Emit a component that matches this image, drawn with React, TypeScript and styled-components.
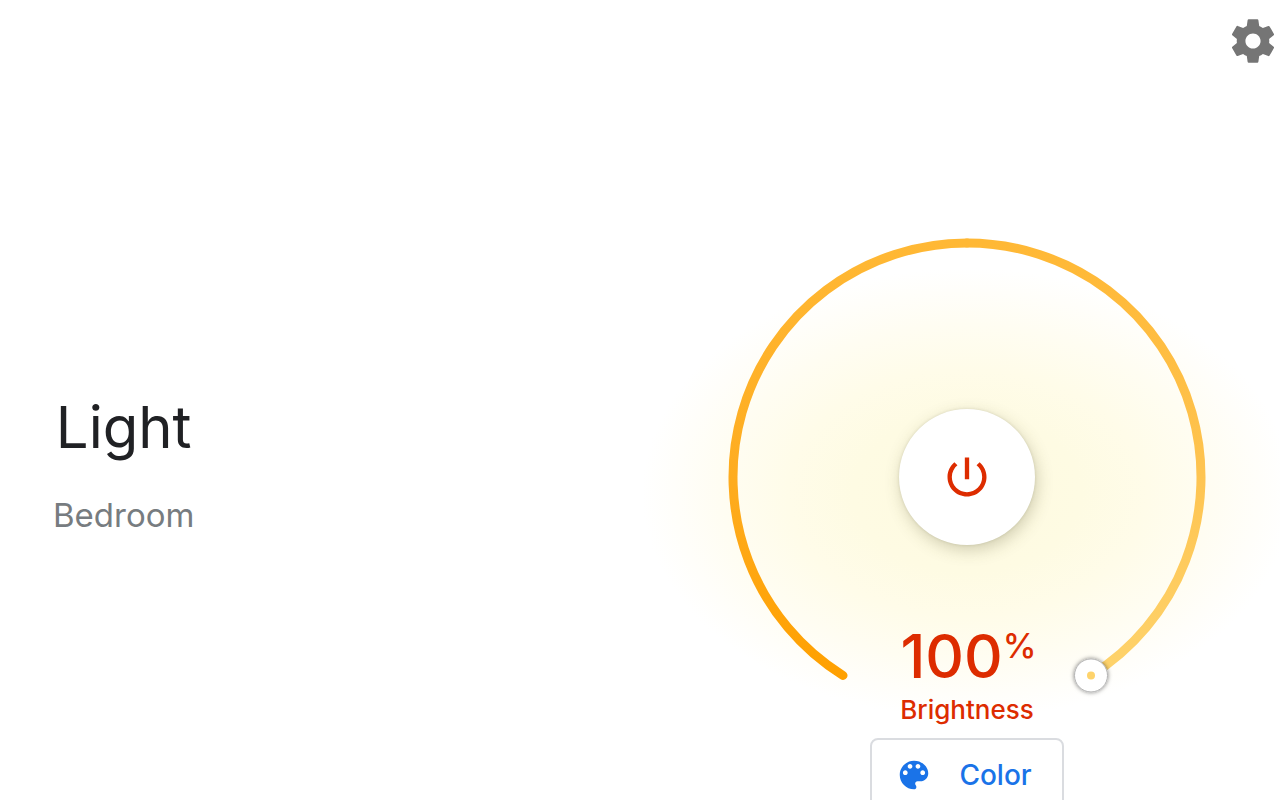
import React, { useState } from "react";
import styled, { createGlobalStyle } from "styled-components";

const GlobalStyle = createGlobalStyle`
  *, *::before, *::after { box-sizing: border-box; }
  body {
    margin: 0;
    background: #ffffff;
    color: #202124;
    font-family: Inter, "Liberation Sans", sans-serif;
  }
`;

const Page = styled.div`
  height: 100vh;
  overflow: hidden auto;
  scrollbar-width: none;
`;

const TopBar = styled.header`
  display: flex;
  justify-content: flex-end;
  padding: 15px 1px;
`;

const IconButton = styled.button`
  display: flex;
  padding: 0;
  border: 0;
  background: none;
  color: #757575;
  cursor: pointer;
`;

const Icon = styled.svg<{ $size: number }>`
  display: block;
  flex: none;
  width: ${(p) => p.$size}px;
  height: ${(p) => p.$size}px;
  fill: currentColor;
`;

const Content = styled.main`
  display: grid;
  grid-template-columns: 1fr 1fr;
`;

const Device = styled.section`
  display: flex;
  flex-direction: column;
  align-items: flex-start;
  justify-content: center;
  padding: 24px 0 0 53px;
`;

const DeviceText = styled.div`
  text-align: center;
`;

const DeviceName = styled.h1`
  margin: 0;
  font-size: 58px;
  line-height: 88px;
  font-weight: 400;
`;

const Room = styled.p`
  margin: 0;
  font-size: 33px;
  line-height: 88px;
  color: #777c80;
`;

const Controls = styled.section`
  display: flex;
  flex-direction: column;
  align-items: center;
  padding: 155px 0 24px 14px;
  background: radial-gradient(
    ellipse 325px 225px at 327px 411px,
    #fefae0 0%,
    #fefbe3 35%,
    #fffce9 55%,
    #fffdf2 75%,
    #fffefa 90%,
    #ffffff 100%
  );
`;

const Dial = styled.div`
  display: grid;
  place-items: center;
  width: 480px;
  height: 480px;

  > * {
    grid-area: 1 / 1;
  }
`;

const DialArc = styled.svg`
  width: 480px;
  height: 480px;
  overflow: visible;
`;

const PowerButton = styled.button`
  display: flex;
  align-items: center;
  justify-content: center;
  width: 136px;
  height: 136px;
  padding: 0;
  border: 0;
  border-radius: 50%;
  background: #ffffff;
  color: #dd2c00;
  box-shadow: 0 0 3px rgba(80, 80, 40, 0.16), 2px 5px 16px rgba(80, 80, 40, 0.26);
  cursor: pointer;
`;

const Readout = styled.label`
  display: flex;
  flex-direction: column;
  align-items: center;
  align-self: end;
  gap: 2px;
  margin-bottom: -9px;
  color: #dd2c00;
  font-weight: 500;
`;

const Level = styled.output`
  display: flex;
  align-items: flex-start;
  padding-left: 3px;
  font-size: 60px;
  line-height: 72px;
`;

const Unit = styled.span`
  padding-top: 6px;
  font-size: 34px;
  line-height: 40px;
`;

const ReadoutLabel = styled.span`
  font-size: 26px;
  line-height: 32px;
`;

const LevelInput = styled.input`
  align-self: end;
  width: 320px;
  height: 24px;
  margin: 0;
  opacity: 0;
  cursor: pointer;
`;

const ColorButton = styled.button`
  display: flex;
  align-items: center;
  gap: 26px;
  margin-top: 21px;
  padding: 16px 30px 16px 23px;
  border: 2px solid #dadce0;
  border-radius: 8px;
  background: #ffffff;
  color: #1a73e8;
  font: inherit;
  font-size: 28px;
  line-height: 38px;
  font-weight: 500;
  cursor: pointer;
`;

const CENTER = 240;
const RADIUS = 234;
const SWEEP = 148;

// Angles are in degrees, clockwise from the top of the dial.
const pointAt = (angle: number) => {
  const rad = (angle * Math.PI) / 180;
  return { x: CENTER + RADIUS * Math.sin(rad), y: CENTER - RADIUS * Math.cos(rad) };
};

const arc = (from: number, to: number) => {
  const a = pointAt(from);
  const b = pointAt(to);
  return `M${a.x} ${a.y}A${RADIUS} ${RADIUS} 0 0 1 ${b.x} ${b.y}`;
};

const SettingsIcon = () => (
  <Icon $size={52} viewBox="0 0 24 24" aria-hidden="true">
    <path d="M19.43 12.98c.04-.32.07-.64.07-.98s-.03-.66-.07-.98l2.11-1.65c.19-.15.24-.42.12-.64l-2-3.46c-.12-.22-.39-.3-.61-.22l-2.49 1c-.52-.4-1.08-.73-1.69-.98l-.38-2.65C14.46 2.18 14.25 2 14 2h-4c-.25 0-.46.18-.49.42l-.38 2.65c-.61.25-1.17.59-1.69.98l-2.49-1c-.23-.09-.49 0-.61.22l-2 3.46c-.13.22-.07.49.12.64l2.11 1.65c-.04.32-.07.65-.07.98s.03.66.07.98l-2.11 1.65c-.19.15-.24.42-.12.64l2 3.46c.12.22.39.3.61.22l2.49-1c.52.4 1.08.73 1.69.98l.38 2.65c.03.24.24.42.49.42h4c.25 0 .46-.18.49-.42l.38-2.65c.61-.25 1.17-.59 1.69-.98l2.49 1c.23.09.49 0 .61-.22l2-3.46c.12-.22.07-.49-.12-.64l-2.11-1.65zM12 15.5c-1.93 0-3.5-1.57-3.5-3.5s1.57-3.5 3.5-3.5 3.5 1.57 3.5 3.5-1.57 3.5-3.5 3.5z" />
  </Icon>
);

const PowerIcon = () => (
  <Icon $size={52} viewBox="0 0 24 24" aria-hidden="true">
    <path d="M13 3h-2v10h2V3zm4.83 2.17l-1.42 1.42C17.99 7.86 19 9.81 19 12c0 3.87-3.13 7-7 7s-7-3.13-7-7c0-2.19 1.01-4.14 2.58-5.42L6.17 5.17C4.23 6.82 3 9.26 3 12c0 4.97 4.03 9 9 9s9-4.03 9-9c0-2.74-1.23-5.18-3.17-6.83z" />
  </Icon>
);

const PaletteIcon = () => (
  <Icon $size={38} viewBox="0 0 24 24" aria-hidden="true">
    <path d="M12 3c-4.97 0-9 4.03-9 9s4.03 9 9 9c.83 0 1.5-.67 1.5-1.5 0-.39-.15-.74-.39-1.01-.23-.26-.38-.61-.38-.99 0-.83.67-1.5 1.5-1.5H16c2.76 0 5-2.24 5-5 0-4.42-4.03-8-9-8zm-5.5 9c-.83 0-1.5-.67-1.5-1.5S5.67 9 6.5 9 8 9.67 8 10.5 7.33 12 6.5 12zm3-4C8.67 8 8 7.33 8 6.5S8.67 5 9.5 5s1.5.67 1.5 1.5S10.33 8 9.5 8zm5 0c-.83 0-1.5-.67-1.5-1.5S13.67 5 14.5 5s1.5.67 1.5 1.5S15.33 8 14.5 8zm3 4c-.83 0-1.5-.67-1.5-1.5S16.67 9 17.5 9s1.5.67 1.5 1.5-.67 1.5-1.5 1.5z" />
  </Icon>
);

const BrightnessArc = ({ level }: { level: number }) => {
  const angle = -SWEEP + (level / 100) * SWEEP * 2;
  const handle = pointAt(angle);
  return (
    <DialArc viewBox="0 0 480 480" aria-hidden="true">
      <defs>
        <linearGradient id="rise" gradientUnits="userSpaceOnUse" x1="0" y1="440" x2="0" y2="6">
          <stop offset="0" stopColor="#ffa000" />
          <stop offset="0.45" stopColor="#feac1f" />
          <stop offset="1" stopColor="#ffb835" />
        </linearGradient>
        <linearGradient id="fall" gradientUnits="userSpaceOnUse" x1="0" y1="6" x2="0" y2="440">
          <stop offset="0" stopColor="#ffb835" />
          <stop offset="0.5" stopColor="#fec34f" />
          <stop offset="1" stopColor="#fed36c" />
        </linearGradient>
        <filter id="lift" x="-50%" y="-50%" width="200%" height="200%">
          <feDropShadow dx="0" dy="0" stdDeviation="2" floodColor="#000000" floodOpacity="0.5" />
        </filter>
      </defs>
      <g fill="none" strokeWidth="9" strokeLinecap="round">
        {angle > 0 && <path d={arc(0, angle)} stroke="url(#fall)" />}
        <path d={arc(-SWEEP, Math.min(angle, 0))} stroke="url(#rise)" />
      </g>
      <circle cx={handle.x} cy={handle.y} r="16.5" fill="#ffffff" stroke="#b4b4b4" strokeWidth="1" filter="url(#lift)" />
      <circle cx={handle.x} cy={handle.y} r="4" fill="#fed36c" />
    </DialArc>
  );
};

export default function App() {
  const [level, setLevel] = useState(100);
  return (
    <Page>
      <GlobalStyle />
      <TopBar>
        <IconButton type="button" aria-label="Settings">
          <SettingsIcon />
        </IconButton>
      </TopBar>
      <Content>
        <Device>
          <DeviceText>
            <DeviceName>Light</DeviceName>
            <Room>Bedroom</Room>
          </DeviceText>
        </Device>
        <Controls>
          <Dial>
            <BrightnessArc level={level} />
            <PowerButton type="button" aria-label="Power">
              <PowerIcon />
            </PowerButton>
            <Readout htmlFor="brightness">
              <Level htmlFor="brightness">
                {level}
                <Unit>%</Unit>
              </Level>
              <ReadoutLabel>Brightness</ReadoutLabel>
            </Readout>
            <LevelInput
              id="brightness"
              type="range"
              min={0}
              max={100}
              value={level}
              onChange={(e) => setLevel(Number(e.target.value))}
            />
          </Dial>
          <ColorButton type="button">
            <PaletteIcon />
            Color
          </ColorButton>
        </Controls>
      </Content>
    </Page>
  );
}
